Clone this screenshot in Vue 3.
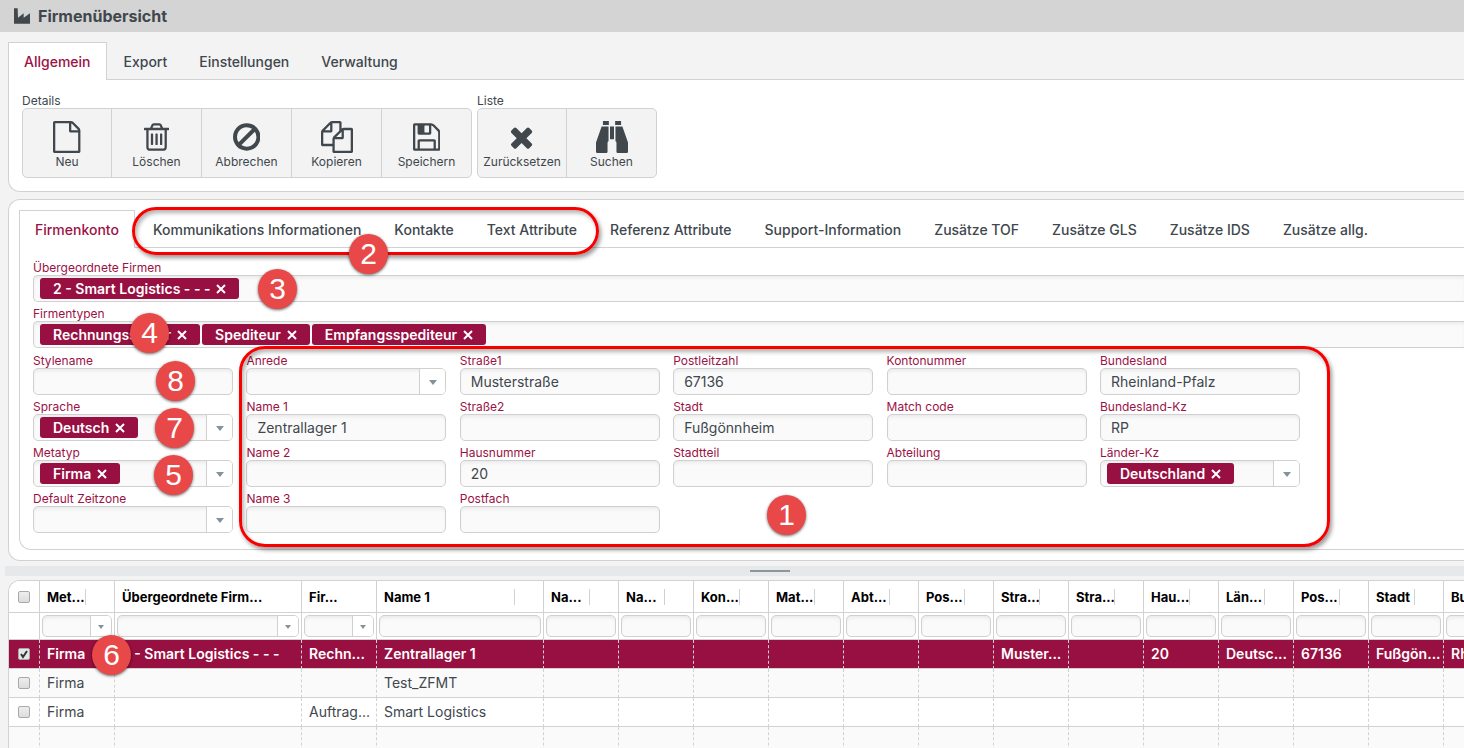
<script setup>
import { ref, reactive } from 'vue'

const mainTabs = ['Allgemein', 'Export', 'Einstellungen', 'Verwaltung']
const detailTabs = [
  'Firmenkonto', 'Kommunikations Informationen', 'Kontakte', 'Text Attribute',
  'Referenz Attribute', 'Support-Information', 'Zusätze TOF', 'Zusätze GLS',
  'Zusätze IDS', 'Zusätze allg.'
]
const activeMain = ref(0)
const activeDetail = ref(0)

const icons = {
  neu: { w: 1536, d: 'M1468 380q28 28 48 76t20 88v1152q0 40-28 68t-68 28h-1344q-40 0-68-28t-28-68v-1600q0-40 28-68t68-28h896q40 0 88 20t76 48zM1024 136v376h376q-10-29-22-41l-313-313q-12-12-41-22zM1408 1664v-1024h-416q-40 0-68-28t-28-68v-416h-768v1536h1280z' },
  loeschen: { w: 1408, d: 'M512 736v576q0 14-9 23t-23 9h-64q-14 0-23-9t-9-23v-576q0-14 9-23t23-9h64q14 0 23 9t9 23zM768 736v576q0 14-9 23t-23 9h-64q-14 0-23-9t-9-23v-576q0-14 9-23t23-9h64q14 0 23 9t9 23zM1024 736v576q0 14-9 23t-23 9h-64q-14 0-23-9t-9-23v-576q0-14 9-23t23-9h64q14 0 23 9t9 23zM1152 1460v-948h-896v948q0 22 7 40.5t14.5 27 10.5 8.5h832q3 0 10.5-8.5t14.5-27 7-40.5zM480 384h448l-48-117q-7-9-17-11h-317q-10 2-17 11zM1408 416v64q0 14-9 23t-23 9h-96v948q0 83-47 143.5t-113 60.5h-832q-66 0-113-58.5t-47-141.5v-952h-96q-14 0-23-9t-9-23v-64q0-14 9-23t23-9h309l70-167q15-37 54-63t79-26h320q40 0 79 26t54 63l70 167h309q14 0 23 9t9 23z' },
  abbrechen: { w: 1536, d: 'M1312 893q0-161-87-295l-754 753q137 89 297 89 111 0 211.5-43.5t173.5-116.5 116-174.5 43-212.5zM313 1192l755-754q-135-91-300-91-148 0-273 73t-198 199-73 274q0 162 89 299zM1536 893q0 157-61 300t-163.5 246-245 164-298.5 61-298.5-61-245-164-163.5-246-61-300 61-299.5 163.5-245.5 245-164 298.5-61 298.5 61 245 164 163.5 245.5 61 299.5z' },
  kopieren: { w: 1792, d: 'M1696 384q40 0 68 28t28 68v1216q0 40-28 68t-68 28h-960q-40 0-68-28t-28-68v-288h-544q-40 0-68-28t-28-68v-672q0-40 20-88t48-76l408-408q28-28 76-48t88-20h416q40 0 68 28t28 68v328q68-40 128-40h416zM1152 597l-299 299h299v-299zM512 213l-299 299h299v-299zM708 860l316-316v-416h-384v416q0 40-28 68t-68 28h-416v640h512v-256q0-40 20-88t48-76zM1664 1664v-1152h-384v416q0 40-28 68t-68 28h-416v640h896z' },
  speichern: { w: 1536, d: 'M384 1536h768v-384h-768v384zM1280 1536h128v-896q0-14-10-38.5t-20-34.5l-281-281q-10-10-34-20t-39-10v416q0 40-28 68t-68 28h-576q-40 0-68-28t-28-68v-416h-128v1280h128v-416q0-40 28-68t68-28h832q40 0 68 28t28 68v416zM896 608v-320q0-13-9.5-22.5t-22.5-9.5h-192q-13 0-22.5 9.5t-9.5 22.5v320q0 13 9.5 22.5t22.5 9.5h192q13 0 22.5-9.5t9.5-22.5zM1536 640v928q0 40-28 68t-68 28h-1344q-40 0-68-28t-28-68v-1344q0-40 28-68t68-28h928q40 0 88 20t76 48l280 280q28 28 48 76t20 88z' },
  reset: { w: 1408, d: 'M1298 1322q0 40-28 68l-136 136q-28 28-68 28t-68-28l-294-294-294 294q-28 28-68 28t-68-28l-136-136q-28-28-28-68t28-68l294-294-294-294q-28-28-28-68t28-68l136-136q28-28 68-28t68 28l294 294 294-294q28-28 68-28t68 28l136 136q28 28 28 68t-28 68l-294 294 294 294q28 28 28 68z' },
  suchen: { w: 1792, d: 'M388 0h332v222h-332zM1072 0h332v222h-332zM314 314h388v813q-56 0-56 92v500q0 73-73 73h-499q-74 0-74-73v-519zM1478 314h-388v813q56 0 56 92v500q0 73 73 73h499q74 0 74-73v-519zM785 314h222v702h-222z' }
}

const groups = [
  { title: 'Details', items: [
    { label: 'Neu', icon: icons.neu },
    { label: 'Löschen', icon: icons.loeschen },
    { label: 'Abbrechen', icon: icons.abbrechen },
    { label: 'Kopieren', icon: icons.kopieren },
    { label: 'Speichern', icon: icons.speichern }
  ] },
  { title: 'Liste', items: [
    { label: 'Zurücksetzen', icon: icons.reset },
    { label: 'Suchen', icon: icons.suchen }
  ] }
]

const wideFields = reactive([
  { id: 'parents', label: 'Übergeordnete Firmen', tokens: ['2 - Smart Logistics - - -'] },
  { id: 'types', label: 'Firmentypen', tokens: ['Rechnungssteller', 'Spediteur', 'Empfangsspediteur'] }
])

const columns = reactive([
  [
    { id: 'stylename', label: 'Stylename', kind: 'text', value: '' },
    { id: 'sprache', label: 'Sprache', kind: 'token', tokens: ['Deutsch'] },
    { id: 'metatyp', label: 'Metatyp', kind: 'token', tokens: ['Firma'] },
    { id: 'zeitzone', label: 'Default Zeitzone', kind: 'select' }
  ],
  [
    { id: 'anrede', label: 'Anrede', kind: 'select' },
    { id: 'name1', label: 'Name 1', kind: 'text', value: 'Zentrallager 1' },
    { id: 'name2', label: 'Name 2', kind: 'text', value: '' },
    { id: 'name3', label: 'Name 3', kind: 'text', value: '' }
  ],
  [
    { id: 'strasse1', label: 'Straße1', kind: 'text', value: 'Musterstraße' },
    { id: 'strasse2', label: 'Straße2', kind: 'text', value: '' },
    { id: 'hausnummer', label: 'Hausnummer', kind: 'text', value: '20' },
    { id: 'postfach', label: 'Postfach', kind: 'text', value: '' }
  ],
  [
    { id: 'plz', label: 'Postleitzahl', kind: 'text', value: '67136' },
    { id: 'stadt', label: 'Stadt', kind: 'text', value: 'Fußgönnheim' },
    { id: 'stadtteil', label: 'Stadtteil', kind: 'text', value: '' }
  ],
  [
    { id: 'konto', label: 'Kontonummer', kind: 'text', value: '' },
    { id: 'match', label: 'Match code', kind: 'text', value: '' },
    { id: 'abteilung', label: 'Abteilung', kind: 'text', value: '' }
  ],
  [
    { id: 'bundesland', label: 'Bundesland', kind: 'text', value: 'Rheinland-Pfalz' },
    { id: 'bundeslandkz', label: 'Bundesland-Kz', kind: 'text', value: 'RP' },
    { id: 'laenderkz', label: 'Länder-Kz', kind: 'token', tokens: ['Deutschland'] }
  ]
])

const gridCols = [
  { t: 'Met...', size: 'n', combo: true, bar: true },
  { t: 'Übergeordnete Firm...', size: 'l', combo: true, bar: false },
  { t: 'Fir...', size: 'n', combo: true, bar: false },
  { t: 'Name 1', size: 'm', bar: true },
  ...['Na...', 'Na...', 'Kon...', 'Mat...', 'Abt...', 'Pos...', 'Stra...', 'Stra...', 'Hau...', 'Län...', 'Pos...', 'Stadt', 'Bun...']
    .map(t => ({ t, size: 'n', bar: true }))
]
const rows = reactive([
  { checked: true, cells: ['Firma', '2 - Smart Logistics - - -', 'Rechn...', 'Zentrallager 1', '', '', '', '', '', '', 'Muster...', '', '20', 'Deutsc...', '67136', 'Fußgön...', 'Rheinl...'] },
  { checked: false, cells: ['Firma', '', '', 'Test_ZFMT', '', '', '', '', '', '', '', '', '', '', '', '', ''] },
  { checked: false, cells: ['Firma', '', 'Auftrag...', 'Smart Logistics', '', '', '', '', '', '', '', '', '', '', '', '', ''] }
])

const remove = (field, i) => field.tokens.splice(i, 1)
</script>

<template>
  <div class="page">
    <header class="titlebar">
      <svg class="factory" viewBox="0 0 48 46" aria-hidden="true"><path d="M0 0h11l1 28 17-13v13l19-13v31H0z" /></svg>
      <h1>Firmenübersicht</h1>
    </header>

    <section class="ribbon">
      <nav class="tabs">
        <button v-for="(t, i) in mainTabs" :key="t" type="button" class="tab" :class="{ active: i === activeMain }" @click="activeMain = i">{{ t }}</button>
      </nav>
      <div class="ribbon-body">
        <div v-for="g in groups" :key="g.title" class="group">
          <span class="group-title">{{ g.title }}</span>
          <div class="group-buttons">
            <button v-for="b in g.items" :key="b.label" type="button" class="tool">
              <svg class="tool-icon" :viewBox="`0 0 ${b.icon.w} 1792`" aria-hidden="true"><path :d="b.icon.d" /></svg>
              <span>{{ b.label }}</span>
            </button>
          </div>
        </div>
      </div>
    </section>

    <section class="card">
      <nav class="tabs detail-tabs">
        <button v-for="(t, i) in detailTabs" :key="t" type="button" class="tab" :class="{ active: i === activeDetail }" @click="activeDetail = i">{{ t }}</button>
      </nav>
      <form class="form" @submit.prevent>
        <div v-for="f in wideFields" :key="f.id" class="field wide">
          <label :for="f.id">{{ f.label }}</label>
          <div class="box tokens">
            <span v-for="(t, i) in f.tokens" :key="t" class="token">{{ t }}
              <button type="button" class="remove" :aria-label="`${t} entfernen`" @click="remove(f, i)"><svg viewBox="0 0 10 10"><path d="M1 1l8 8M9 1l-8 8" /></svg></button>
            </span>
            <input :id="f.id" type="text" class="bare">
          </div>
        </div>
        <div class="columns">
          <div v-for="(col, c) in columns" :key="c" class="column">
            <div v-for="f in col" :key="f.id" class="field">
              <label :for="f.id">{{ f.label }}</label>
              <input v-if="f.kind === 'text'" :id="f.id" v-model="f.value" type="text" class="box text">
              <div v-else-if="f.kind === 'select'" class="box combo">
                <select :id="f.id"><option></option></select>
                <span class="arrow"></span>
              </div>
              <div v-else class="box tokens combo">
                <span v-for="(t, i) in f.tokens" :key="t" class="token">{{ t }}
                  <button type="button" class="remove" :aria-label="`${t} entfernen`" @click="remove(f, i)"><svg viewBox="0 0 10 10"><path d="M1 1l8 8M9 1l-8 8" /></svg></button>
                </span>
                <input :id="f.id" type="text" class="bare">
                <button type="button" class="arrow" :aria-label="`${f.label} öffnen`"></button>
              </div>
            </div>
          </div>
        </div>
      </form>
    </section>

    <div class="splitter"><span class="handle"></span></div>

    <section class="grid">
      <table>
        <colgroup>
          <col class="c-check">
          <col v-for="(c, i) in gridCols" :key="i" :class="'c-' + c.size">
        </colgroup>
        <thead>
          <tr class="head">
            <th class="check"><input type="checkbox" aria-label="Alle auswählen"></th>
            <th v-for="(c, i) in gridCols" :key="i"><div class="th"><span>{{ c.t }}</span><i v-if="c.bar"></i></div></th>
          </tr>
          <tr class="filter">
            <td></td>
            <td v-for="(c, i) in gridCols" :key="i">
              <div v-if="c.combo" class="box combo small">
                <select :aria-label="`Filter ${c.t}`"><option></option></select>
                <span class="arrow"></span>
              </div>
              <input v-else type="text" class="box small" :aria-label="`Filter ${c.t}`">
            </td>
          </tr>
        </thead>
        <tbody>
          <tr v-for="(r, n) in rows" :key="n" :class="{ selected: r.checked }">
            <td class="check"><input v-model="r.checked" type="checkbox" :aria-label="`Zeile ${n + 1} auswählen`"></td>
            <td v-for="(c, i) in r.cells" :key="i">{{ c }}</td>
          </tr>
          <tr>
            <td class="check"></td>
            <td v-for="(c, i) in gridCols" :key="i"></td>
          </tr>
        </tbody>
      </table>
    </section>

    <div class="frame frame-tabs"></div>
    <div class="frame frame-fields"></div>
    <span class="pin p1">1</span>
    <span class="pin p2">2</span>
    <span class="pin p3">3</span>
    <span class="pin p4">4</span>
    <span class="pin p5">5</span>
    <span class="pin p6">6</span>
    <span class="pin p7">7</span>
    <span class="pin p8">8</span>
  </div>
</template>

<style>
body { margin: 0; }
</style>

<style scoped>
.page {
  position: relative;
  display: flex;
  flex-direction: column;
  height: 100vh;
  overflow: hidden;
  background: #f3f3f3;
  color: #40474d;
  font: 14px/18px Inter, "Open Sans", sans-serif;
}
.page *, .page *::before { box-sizing: border-box; }
button, input, select { font: inherit; color: inherit; margin: 0; padding: 0; border: 0; background: none; min-width: 0; }
button { cursor: pointer; }

.titlebar { display: flex; align-items: center; gap: 8px; flex: none; height: 32px; padding-left: 14px; background: #d4d4d4; }
.titlebar h1 { margin: 0; font-size: 16px; font-weight: 700; }
.factory { width: 16px; height: 16px; fill: #40474d; }

.tabs { display: flex; gap: 2px; height: 38px; border-bottom: 1px solid #d2d2d2; }
.detail-tabs { gap: 3px; }
.tab { height: 38px; padding: 0 14px; border: 1px solid transparent; border-bottom: 0; font-weight: 500; white-space: nowrap; }
.tab.active { padding: 0 15px; border-color: #d2d2d2; background: #fff; color: #9b1245; }

.ribbon { flex: none; margin: 10px 0 0 8px; }
.ribbon-body { display: flex; gap: 5px; padding: 13px 13px; height: 112px; background: #fff; border: 1px solid #d2d2d2; border-width: 0 0 1px 1px; border-radius: 0 0 0 12px; }
.group { display: flex; flex-direction: column; }
.group-title { font-size: 12px; line-height: 15px; }
.group-buttons { display: flex; border: 1px solid #d2d2d2; border-radius: 5px; overflow: hidden; background: #f3f3f3; }
.tool { display: flex; flex-direction: column; align-items: center; width: 90px; height: 68px; padding-top: 12px; font-size: 12px; line-height: 18px; border-left: 1px solid #d2d2d2; }
.tool:first-child { width: 88px; border-left: 0; }
.tool-icon { height: 32px; fill: #40474d; }

.card { flex: none; margin: 7px 0 0 8px; padding: 10px 0 10px 10px; background: #fff; border: 1px solid #d2d2d2; border-right: 0; border-radius: 12px 0 0 12px; }
.form { padding: 13px 0 16px 13px; border: 1px solid #d2d2d2; border-width: 0 0 1px 1px; border-radius: 0 0 0 12px; }
.field { display: flex; flex-direction: column; height: 41px; }
.field.wide { margin-bottom: 5px; }
.field label { font-size: 12px; line-height: 14px; color: #9b1245; }
.columns { display: grid; grid-template-columns: repeat(6, 200px); justify-content: space-between; width: 1267px; padding-top: 1px; }
.column { display: flex; flex-direction: column; gap: 5px; }

.box { display: flex; width: 100%; height: 27px; border: 1px solid #d0d0d0; border-radius: 5px; background: #fafafa; box-shadow: inset 0 3px 4px -2px #e4e4e4; overflow: hidden; }
.wide .box { border-right: 0; border-radius: 5px 0 0 5px; }
.box.text { padding: 0 10px; }
.tokens { align-items: center; gap: 2px; padding-left: 6px; }
.bare { flex: 1; height: 25px; outline: 0; }
.combo select { flex: 1; appearance: none; height: 100%; }
.arrow { position: relative; flex: none; width: 26px; height: 25px; border-left: 1px solid #d0d0d0; background: #fff; }
span.arrow { pointer-events: none; }
.arrow::before { content: ""; position: absolute; left: 9px; top: 11px; border: 4px solid transparent; border-top: 5px solid #84929a; border-bottom: 0; }
.token { display: flex; align-items: center; gap: 6px; height: 21px; padding: 0 13px; border-radius: 3px; background: #980f41; color: #fff; font-weight: 600; white-space: nowrap; }
.remove { display: flex; width: 10px; height: 10px; }
.remove svg { width: 10px; height: 10px; fill: none; stroke: #fff; stroke-width: 2; }

.splitter { display: flex; justify-content: center; align-items: center; flex: none; height: 10px; margin: 5px 0 4px 5px; background: #e6e8ea; }
.handle { width: 40px; height: 2px; margin-left: 71px; background: #8b979d; }

.grid { flex: 1; min-height: 0; margin-left: 8px; overflow: hidden; background: #fafafa; border: 1px solid #d2d2d2; border-width: 1px 0 0 1px; border-radius: 12px 0 0 0; }
table { width: 1510px; table-layout: fixed; border-collapse: separate; border-spacing: 0; }
.c-check { width: 31px; }
.c-n { width: 75px; }
.c-m { width: 167px; }
.c-l { width: 187px; }
th, td { padding: 0; border-right: 1px solid #d2d2d2; border-bottom: 1px solid #d2d2d2; background: #fff; text-align: left; white-space: nowrap; overflow: hidden; }
.head th { height: 32px; color: #000; font-size: 13px; font-weight: 700; }
.th { display: flex; align-items: center; padding-left: 7px; }
.th span { flex: 1; min-width: 0; white-space: nowrap; }
.th i { flex: none; width: 1px; height: 16px; margin-right: 28px; background: #d2d2d2; }
.filter td { height: 27px; padding: 0 2px; }
.small { height: 22px; }
.small .arrow { width: 21px; height: 20px; }
.small .arrow::before { left: 7px; top: 9px; border-width: 4px 3px 0; }
tbody td { height: 29px; padding-left: 7px; border-right-style: dashed; }
tbody tr:nth-child(even) td { background: #fafafa; }
tbody tr.selected td { background: #980f41; color: #fff; font-weight: 600; }
th.check, td.check { padding: 0; text-align: center; }
.check input { appearance: none; display: block; width: 12px; height: 12px; margin: 0 auto; border: 1px solid #a8a8a8; border-radius: 2px; background: linear-gradient(#eee, #dcdcdc); }
.check input:checked { background: url("data:image/svg+xml,%3Csvg xmlns='http://www.w3.org/2000/svg' viewBox='0 0 10 10'%3E%3Cpath d='M2 5l2 3 4-6' fill='none' stroke='%23333' stroke-width='2'/%3E%3C/svg%3E") #e6e6e6; }

/* Annotations lying over the page */
.frame { position: absolute; border: 3px solid #f80000; box-shadow: 2px 3px 4px rgba(0, 0, 0, .4), inset 2px 3px 4px rgba(0, 0, 0, .3); pointer-events: none; }
.frame-tabs { left: 132px; top: 207px; width: 467px; height: 48px; border-radius: 24px; }
.frame-fields { left: 239px; top: 346px; width: 1091px; height: 201px; border-radius: 26px; }
.pin { position: absolute; display: flex; align-items: center; justify-content: center; width: 39px; height: 40px; border-radius: 50%; background: #e84848; box-shadow: 0 1px 3px rgba(0, 0, 0, .6); color: #fff; font: 30px/40px "Liberation Sans", Arial, sans-serif; }
.p1 { left: 767px; top: 495px; }
.p2 { left: 349px; top: 234px; }
.p3 { left: 258px; top: 269px; }
.p4 { left: 130px; top: 313px; }
.p5 { left: 154px; top: 455px; }
.p6 { left: 92px; top: 635px; }
.p7 { left: 155px; top: 408px; }
.p8 { left: 156px; top: 361px; }
</style>
